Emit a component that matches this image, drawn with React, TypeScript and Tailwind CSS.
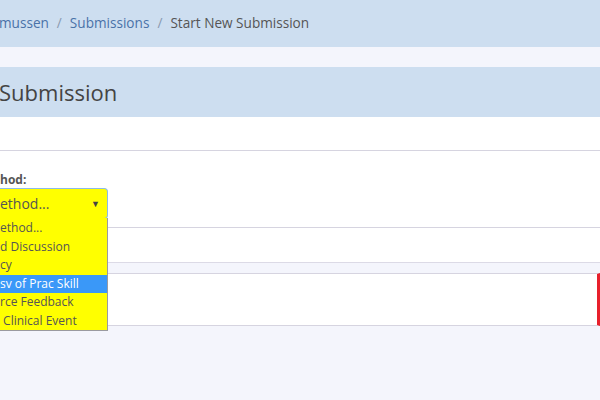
import React from 'react';

const options = ['ethod...', 'd Discussion', 'cy', 'sv of Prac Skill', 'rce Feedback', '\u00a0Clinical Event'];

export default function App() {
  return (
    <div className="relative w-[600px] h-[400px] overflow-hidden bg-[#f4f5fc] text-[#555] font-['Open_Sans',sans-serif]">
      <nav className="h-[47px] bg-[#cddef0] flex items-center text-[13.6px]">
        <span className="text-[#4a72a8] -ml-[1px]">mussen</span>
        <span className="mx-[8px] text-[#8a9ab0]">/</span>
        <span className="text-[#4a72a8]">Submissions</span>
        <span className="mx-[8px] text-[#8a9ab0]">/</span>
        <span className="text-[#555]">Start New Submission</span>
      </nav>

      <div className="h-[20px]" />

      <div className="h-[50px] bg-[#cddef0] flex items-center text-[22px] text-[#444] -ml-[1px]">Submission</div>

      <div className="bg-white border-b border-[#dcdae6]">
        <div className="h-[34px] border-b border-[#d6d4e0]" />
        <div className="h-[77px] border-b border-[#d6d4e0] pt-[22px]">
          <div className="text-[12px] font-bold leading-[14px] text-[#555]">hod:</div>
          <div className="mt-[1px] w-[108px] h-[31px] bg-[#ffff00] border border-l-0 border-[#8cbbe8] rounded-r-[4px] flex items-center justify-between pr-[7px] text-[14px] text-[#555]">
            <span>ethod...</span>
            <span className="text-[9px] text-[#444]">▼</span>
          </div>
        </div>
        <div className="h-[34px]" />
      </div>

      <div className="h-[10px]" />

      <div className="h-[53px] bg-white border-t border-b border-[#d6d4e0] border-r-[3px] border-r-[#e8202c]" />

      <ul className="absolute left-0 top-[218px] w-[108px] bg-[#ffff00] border border-l-0 border-t-0 border-[#9a9aa0] text-[12px] text-[#555] pt-[1px]">
        {options.map((o, i) => (
          <li
            key={i}
            className={`h-[18.5px] leading-[18.5px] whitespace-nowrap ${i === 3 ? 'bg-[#3a98f8] text-white' : ''}`}
          >
            {o}
          </li>
        ))}
      </ul>
    </div>
  );
}
